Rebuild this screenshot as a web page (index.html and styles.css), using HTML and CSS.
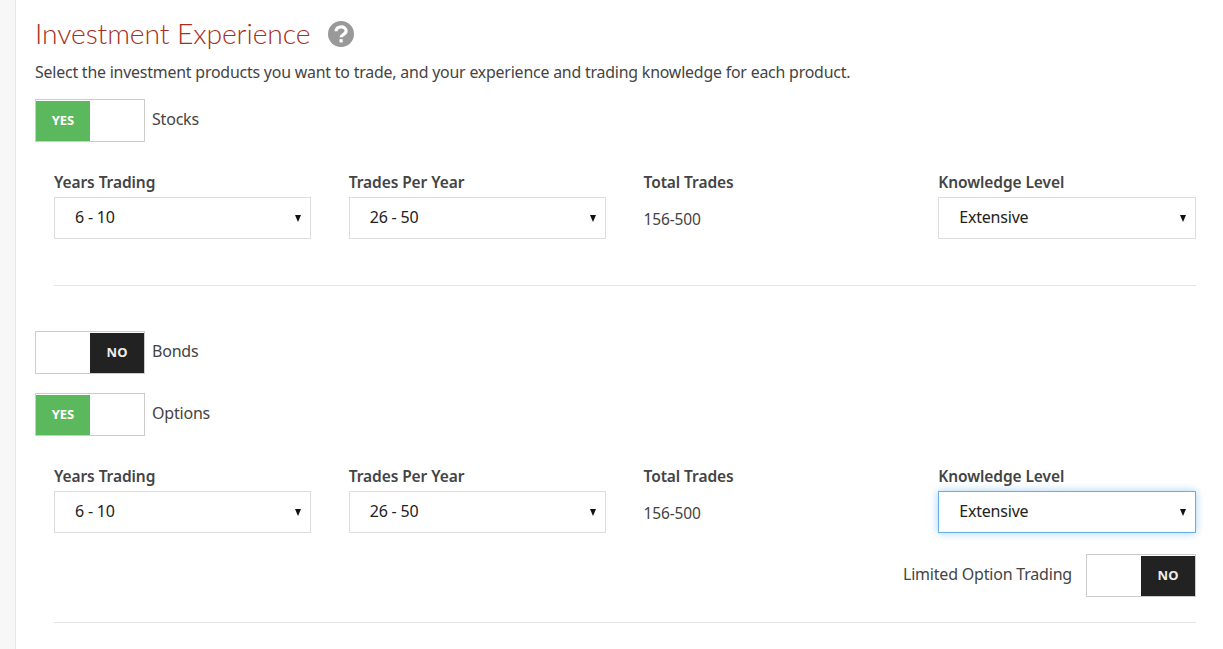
FILE: index.html
```html
<!DOCTYPE html>
<html lang="en">
<head>
<meta charset="utf-8">
<title>Investment Experience</title>
<link rel="stylesheet" href="styles.css">
</head>
<body>
<div class="rail"></div>
<main class="content">
  <div class="heading">
    <h1>Investment Experience</h1>
    <svg class="help" viewBox="0 0 26 26" width="26" height="26" aria-hidden="true">
      <circle cx="13" cy="13" r="13" fill="#999"/>
      <path d="M8 10.300c0-2.900 2.200-4.500 5.100-4.500 2.800 0 5 1.600 5 4.200 0 3.700-5 3.400-5 6.300" fill="none" stroke="#fff" stroke-width="3.200"/>
      <rect x="11.500" y="18.200" width="3.200" height="3.200" fill="#fff"/>
    </svg>
  </div>
  <p class="intro">Select the investment products you want to trade, and your experience and trading knowledge for each product.</p>

  <div class="product">
    <div class="toggle"><span class="yes">YES</span><span class="blank"></span></div>
    <span class="product-name">Stocks</span>
  </div>
  <div class="fields">
    <div class="field"><label>Years Trading</label><div class="select">6 - 10<i class="caret"></i></div></div>
    <div class="field"><label>Trades Per Year</label><div class="select">26 - 50<i class="caret"></i></div></div>
    <div class="field"><label>Total Trades</label><div class="static">156-500</div></div>
    <div class="field"><label>Knowledge Level</label><div class="select">Extensive<i class="caret"></i></div></div>
  </div>
  <hr class="rule rule-stocks">

  <div class="product product-bonds">
    <div class="toggle"><span class="blank"></span><span class="no">NO</span></div>
    <span class="product-name">Bonds</span>
  </div>
  <div class="product product-options">
    <div class="toggle"><span class="yes">YES</span><span class="blank"></span></div>
    <span class="product-name">Options</span>
  </div>
  <div class="fields">
    <div class="field"><label>Years Trading</label><div class="select">6 - 10<i class="caret"></i></div></div>
    <div class="field"><label>Trades Per Year</label><div class="select">26 - 50<i class="caret"></i></div></div>
    <div class="field"><label>Total Trades</label><div class="static">156-500</div></div>
    <div class="field"><label>Knowledge Level</label><div class="select focused">Extensive<i class="caret"></i></div></div>
  </div>
  <div class="limited">
    <span class="limited-label">Limited Option Trading</span>
    <div class="toggle"><span class="blank"></span><span class="no">NO</span></div>
  </div>
  <hr class="rule rule-options">
</main>
</body>
</html>
```

FILE: styles.css
```css
* { box-sizing: border-box; }
html, body { margin: 0; height: 649px; overflow: hidden; background: #fff; }
body {
  display: flex;
  font-family: "Noto Sans", "Liberation Sans", sans-serif;
  color: #444;
}
.rail { width: 16px; flex: none; background: #f7f7f7; border-right: 1px solid #e7e7e7; }
.content { width: 1180px; padding: 0 0 0 19px; flex: none; }
.heading { display: flex; align-items: center; height: 40px; margin-top: 14px; }
h1 {
  margin: 0;
  padding-bottom: 2px;
  font-family: "Lato", sans-serif;
  font-weight: 300;
  font-size: 28.300px;
  letter-spacing: -0.1px;
  color: #a6301c;
}
.help { margin-left: 18px; }
.intro { margin: 6px 0 0; font-size: 15.900px; line-height: 24px; letter-spacing: -0.2px; height: 24px; color: #444; }
.product { display: flex; align-items: center; height: 43px; margin-top: 15px; }
.product-name { margin-left: 7px; font-size: 16px; letter-spacing: -0.2px; margin-top: -4px; }
.product-bonds { margin-top: 45px; }
.product-options { margin-top: 19px; }
.toggle {
  width: 110px; height: 43px; flex: none;
  display: flex;
  border: 1px solid #ccc;
  padding: 1px 1px 0 0;
  background: #fff;
}
.toggle span {
  flex: 0 0 54px;
  display: flex; align-items: center; justify-content: center;
  padding-bottom: 3px;
  font-size: 13px; font-weight: 700;
}
.toggle .blank { flex-grow: 1; }
.yes { background: #5cb85c; color: #fff; }
.no { background: #222; color: #eee; }
.fields {
  display: grid;
  grid-template-columns: repeat(4, 257.250px);
  column-gap: 37.500px;
  margin: 28px 0 0 19px;
  width: 1142px;
}
.field label {
  display: block;
  font-size: 15.500px; font-weight: 600; letter-spacing: -0.08px;
  line-height: 24px;
  color: #444;
}
.select {
  position: relative;
  height: 42px; margin-top: 3px;
  padding: 0 0 2px 20px;
  display: flex; align-items: center;
  border: 1px solid #ddd;
  background: #fff;
  font-size: 16px;
  letter-spacing: -0.2px;
  color: #222;
}
.select.focused { border-color: #66afe9; box-shadow: 0 0 8px rgba(102, 175, 233, .6); }
.caret {
  position: absolute; right: 9px; top: 17px;
  width: 0; height: 0;
  border-left: 3.500px solid transparent;
  border-right: 3.500px solid transparent;
  border-top: 7px solid #111;
}
.static { height: 42px; margin-top: 3px; padding-top: 2px; display: flex; align-items: center; font-size: 15.500px; letter-spacing: -0.15px; color: #444; }
.rule { border: 0; border-top: 1px solid #e4e4e4; margin: 0 0 0 19px; width: 1142px; }
.rule-stocks { margin-top: 46px; }
.limited { display: flex; justify-content: flex-end; align-items: center; width: 1161px; margin-top: 21px; }
.limited-label { margin: 0 14px 4px 0; font-size: 16px; letter-spacing: -0.2px; }
.rule-options { margin-top: 25px; }
```
